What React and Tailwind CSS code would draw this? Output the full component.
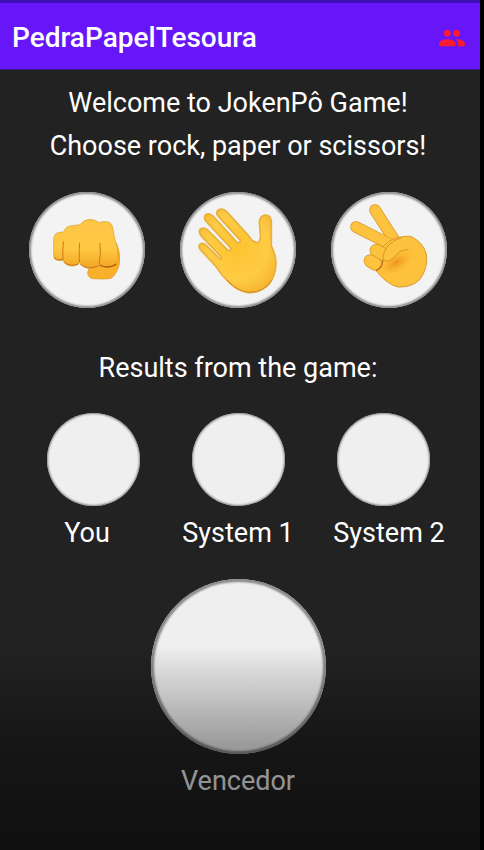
import { MdPeople } from "react-icons/md";

function Shades({ id }) {
  return (
    <defs>
      <radialGradient id={id} cx="0.5" cy="0.45" r="0.65">
        <stop offset="0" stopColor="#fdc32f" />
        <stop offset="0.6" stopColor="#fecb45" />
        <stop offset="1" stopColor="#f5b02c" />
      </radialGradient>
      <linearGradient id={id + "-down"} x1="0" y1="0" x2="0" y2="1">
        <stop offset="0" stopColor="#fdc545" />
        <stop offset="0.6" stopColor="#fec943" />
        <stop offset="1" stopColor="#f3a423" />
      </linearGradient>
      <radialGradient id={id + "-crease"}>
        <stop offset="0" stopColor="#ee9418" />
        <stop offset="1" stopColor="#fbb52e" stopOpacity="0" />
      </radialGradient>
    </defs>
  );
}

function Rock() {
  return (
    <svg viewBox="27 36 348 348" className="size-full" aria-hidden="true">
      <Shades id="rock" />
      <path
        d="M290 190 Q303 222 298 252 Q292 280 275 294 Q268 297 250 297 L218 296 Q204 293 203 279 Q203 266 214 262 L246 258 Z"
        fill="#fbb02b"
        stroke="#e29627"
        strokeWidth="2"
      />
      <path
        d="M101 175 Q104 158 119 157 L131 156 Q136 138 155 137 Q170 135 180 134 Q192 119 208 118 Q225 118 237 128 Q249 124 260 125 Q275 126 278 142 L284 175 Q296 205 294 236 Q292 260 268 262 Q250 265 238 252 Q230 265 210 265 Q190 265 179 247 Q172 259 154 258 Q136 257 129 240 Q125 243 113 241 Q102 240 101 228 Z"
        fill="url(#rock-down)"
        stroke="#dda032"
        strokeWidth="2"
      />
      <g fill="none" stroke="#c87a18" strokeWidth="3" strokeLinecap="round">
        <path d="M130 185 Q127 215 129 239" />
        <path d="M179 190 Q176 225 179 247" />
        <path d="M240 190 Q243 225 238 250" />
        <path d="M103 233 Q113 244 128 238" />
        <path d="M132 247 Q150 262 175 252" />
        <path d="M182 254 Q205 272 235 257" />
        <path d="M239 255 Q262 268 288 253" stroke="#b65b0b" strokeWidth="4" />
      </g>
    </svg>
  );
}

function Paper() {
  return (
    <svg viewBox="30 36 348 348" className="size-full" aria-hidden="true">
      <Shades id="paper" />
      <path
        d="M266 187 Q273 178 271 162 L268 127 Q269 107 286 105 Q303 106 304 124 L304 198 Q318 225 318 252 Q317 288 295 315 Q268 340 234 338 Q205 333 180 310 Q155 287 135 256 L91 209 Q83 199 91 192 Q98 187 109 196 L151 238 Q157 233 151 228 L92 166 Q84 154 92 146 Q102 141 113 150 L174 211 Q184 213 182 204 L107 123 Q99 111 108 103 Q118 98 129 108 L201 187 Q211 190 211 181 L145 109 Q135 97 145 90 Q157 83 170 95 L235 166 Q251 191 266 187 Z"
        fill="url(#paper)"
        stroke="#e9b03c"
        strokeWidth="5"
        strokeLinejoin="round"
      />
      <path d="M171 300 Q200 334 239 337 Q284 336 306 299" fill="none" stroke="#d18c27" strokeWidth="3" />
    </svg>
  );
}

function Finger({ d, width }) {
  return (
    <g fill="none" strokeLinecap="round">
      <path d={d} stroke="#dc9a2e" strokeWidth={width} />
      <path d={d} stroke="#fdc33f" strokeWidth={width - 5} />
    </g>
  );
}

function Scissors() {
  return (
    <svg viewBox="33 36 348 348" className="size-full" aria-hidden="true">
      <Shades id="scissors" />
      <Finger d="M165 90 L228 188" width={35} />
      <Finger d="M108 141 L205 190" width={35} />
      <path
        d="M205 185 Q235 167 272 169 Q308 185 319 222 Q325 265 299 299 Q274 323 233 321 Q198 312 165 268 L175 215 Z"
        fill="#fec13c"
        stroke="#d99a30"
        strokeWidth="3"
      />
      <ellipse cx="228" cy="248" rx="62" ry="30" transform="rotate(-30 228 248)" fill="url(#scissors-crease)" />
      <Finger d="M169 211 L188 222" width={40} />
      <Finger d="M151 243 L166 252" width={40} />
      <path d="M170 271 Q187 262 188 243" fill="none" stroke="#b86a16" strokeWidth="4" strokeLinecap="round" />
      <path
        d="M245 173 Q216 180 199 205 Q186 224 190 237 Q197 247 211 241 Q222 234 231 222 Q243 209 262 209 Q290 208 300 195 Q285 170 245 173 Z"
        fill="#fdc23e"
      />
      <path d="M245 173 Q216 180 199 205 Q186 224 190 237 Q197 247 211 241 Q222 234 231 222 Q243 209 264 209" fill="none" stroke="#d9942a" strokeWidth="3" strokeLinecap="round" />
    </svg>
  );
}

const choices = [
  { name: "Rock", Icon: Rock },
  { name: "Paper", Icon: Paper },
  { name: "Scissors", Icon: Scissors },
];

const players = ["You", "System 1", "System 2"];

export default function App() {
  return (
    <div className="min-h-screen bg-black pr-1 font-['Roboto',sans-serif] text-white">
      <div className="relative flex min-h-screen flex-col bg-[#222222]">
        <header className="flex h-[70px] items-center justify-between border-t-3 border-b border-t-[#3c0eb4] border-b-[#3a1690] bg-[#6716f8] pt-1 pr-3.5 pl-3">
          <h1 className="text-[28px] leading-8 font-medium">PedraPapelTesoura</h1>
          <button type="button" aria-label="Players" className="text-[#fa1b2f]">
            <MdPeople size={28} />
          </button>
        </header>

        <main className="flex flex-col items-center pt-3 pr-1 text-[27px] leading-[43px]">
          <p>Welcome to JokenPô Game!</p>
          <p>Choose rock, paper or scissors!</p>

          <div className="mt-6 flex gap-[35px]">
            {choices.map(({ name, Icon }) => (
              <button
                key={name}
                type="button"
                aria-label={name}
                className="size-[116px] overflow-hidden rounded-full bg-[#f3f3f3] shadow-[inset_0_0_2px_2px_#8a8a8a]"
              >
                <Icon />
              </button>
            ))}
          </div>

          <h2 className="mt-[39px]">Results from the game:</h2>

          <div className="mt-[23px] flex gap-[52px]">
            {players.map((name) => (
              <div key={name} className="size-[93px] rounded-full bg-[#efefef] shadow-[inset_0_0_2px_1px_#8a8a8a]" />
            ))}
          </div>
          <div className="mt-1.5 flex gap-[35px]">
            {players.map((name) => (
              <p key={name} className="w-[116px] text-center whitespace-nowrap">
                {name}
              </p>
            ))}
          </div>

          <div className="mt-6 size-[175px] rounded-full bg-[#efefef] shadow-[inset_0_0_2px_3px_#8a8a8a]" />
          <p className="mt-1.5">Vencedor</p>
        </main>

        <div className="pointer-events-none absolute inset-x-0 bottom-0 h-[205px] bg-linear-to-b from-black/0 via-black/35 via-48% to-black/55" />
      </div>
    </div>
  );
}
